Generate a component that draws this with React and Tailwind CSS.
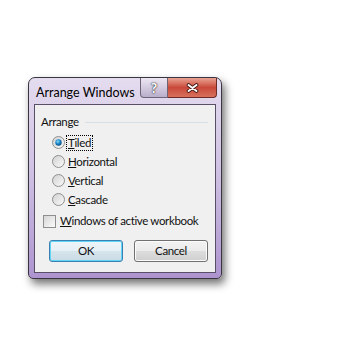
import React from "react";

const font = { fontFamily: 'Lato, "Liberation Sans", sans-serif' };

// Win7 style radio button
function Radio({ checked }) {
  return (
    <svg width="13" height="13" viewBox="0 0 13 13" className="shrink-0">
      <defs>
        <linearGradient id="rbg" x1="0" y1="0" x2="1" y2="1">
          <stop offset="0" stopColor="#d0d0d0" />
          <stop offset="1" stopColor="#fbfbfb" />
        </linearGradient>
        <radialGradient id="rdot" cx="0.4" cy="0.35" r="0.7">
          <stop offset="0" stopColor="#8fe0ff" />
          <stop offset="0.5" stopColor="#1b86c8" />
          <stop offset="1" stopColor="#0c4a78" />
        </radialGradient>
      </defs>
      <circle cx="6.5" cy="6.5" r="6" fill="url(#rbg)" stroke="#8e8f8f" strokeWidth="1" />
      {checked && <circle cx="6.5" cy="6.5" r="3.2" fill="url(#rdot)" />}
    </svg>
  );
}

function Option({ first, rest, checked }) {
  return (
    <div className="flex items-center h-[19px] pl-[17px]">
      <Radio checked={checked} />
      <span
        className={`ml-[2px] px-px leading-[14px] whitespace-nowrap ${
          checked ? "outline outline-1 outline-dotted outline-black" : ""
        }`}
      >
        <u>{first}</u>
        {rest}
      </span>
    </div>
  );
}

export default function App() {
  return (
    <div className="w-[361px] h-[337px] bg-white pt-[77px] pl-[28px]" style={font}>
      <div className="w-[194px] h-[202px] rounded-t-[7px] rounded-b-[5px] border border-[#3a3640] bg-gradient-to-b from-[#e4dcef] via-[#cdbfe2] to-[#ad94cf] shadow-[3px_5px_9px_rgba(0,0,0,0.55)] flex flex-col">
        {/* title bar */}
        <div className="h-[26px] flex items-start">
          <div className="pl-[7px] pt-[7px] text-[12.5px] leading-[16px] text-black whitespace-nowrap">
            Arrange Windows
          </div>
          <div className="ml-auto mr-[4px] flex">
            <div className="w-[28px] h-[20px] rounded-bl-[4px] border border-t-0 border-[#6d6478] bg-gradient-to-b from-[#ece7f2] via-[#d4cbe0] to-[#b9aecb] flex items-center justify-center text-white font-bold text-[14px] leading-none [text-shadow:0_0_2px_#333,0_0_1px_#000]">
              ?
            </div>
            <div className="w-[49px] h-[20px] rounded-br-[4px] border border-l-0 border-t-0 border-[#6e2a24] bg-gradient-to-b from-[#e8a293] via-[#c9483a] to-[#d6705c] flex items-center justify-center">
              <svg width="13" height="10" viewBox="0 0 13 10">
                <path
                  d="M2.5 2 L10.5 8 M10.5 2 L2.5 8"
                  stroke="#3b1410"
                  strokeWidth="3.6"
                  strokeLinecap="round"
                />
                <path
                  d="M2.5 2 L10.5 8 M10.5 2 L2.5 8"
                  stroke="#ffffff"
                  strokeWidth="2"
                  strokeLinecap="round"
                />
              </svg>
            </div>
          </div>
        </div>

        {/* client area */}
        <div className="mx-[5px] mb-[5px] flex-1 border border-[#5a4f68] bg-[#f0f0f0] text-[11.5px] tracking-[-0.35px] text-[#111]">
          <div className="flex items-center mt-[10px] pl-[6px] pr-[7px]">
            <span className="leading-[14px]">Arrange</span>
            <div className="flex-1 ml-[6px] h-px bg-[#d5dfe5]" />
          </div>
          <div className="mt-[4px] flex flex-col">
            <Option first="T" rest="iled" checked />
            <Option first="H" rest="orizontal" />
            <Option first="V" rest="ertical" />
            <Option first="C" rest="ascade" />
          </div>
          <div className="flex items-center mt-[5px] pl-[8px] h-[14px]">
            <div className="w-[13px] h-[13px] border border-[#8e8f8f] bg-gradient-to-br from-[#d6d6d6] to-[#fbfbfb] shrink-0" />
            <span className="ml-[4px] whitespace-nowrap leading-[14px]">
              <u>W</u>indows of active workbook
            </span>
          </div>
          <div className="flex mt-[12px] pl-[14px] gap-[11px]">
            <div className="w-[74px] h-[22px] rounded-[3px] border border-[#3c7fb1] shadow-[inset_0_0_0_1px_#5fd6f7] bg-[linear-gradient(to_bottom,#eef5f9_0%,#e6eff5_50%,#d6e4ec_51%,#c9dbe6_100%)] flex items-center justify-center">
              OK
            </div>
            <div className="w-[74px] h-[22px] rounded-[3px] border border-[#707070] shadow-[inset_0_0_0_1px_#fcfcfc] bg-[linear-gradient(to_bottom,#f2f2f2_0%,#ebebeb_50%,#dddddd_51%,#cfcfcf_100%)] flex items-center justify-center">
              Cancel
            </div>
          </div>
        </div>
      </div>
    </div>
  );
}
